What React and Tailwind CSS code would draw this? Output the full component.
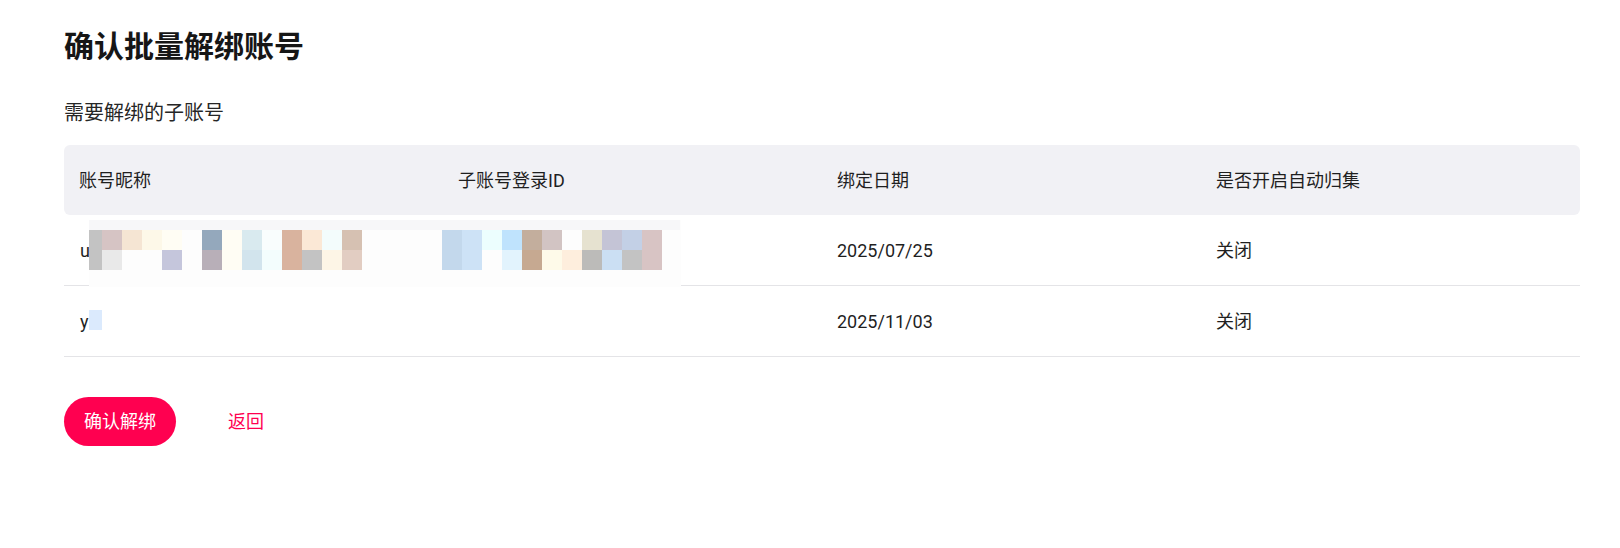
const columns = ["账号昵称", "子账号登录ID", "绑定日期", "是否开启自动归集"];

const rows = [
  { name: "u", loginId: "", date: "2025/07/25", auto: "关闭" },
  { name: "yu", loginId: "", date: "2025/11/03", auto: "关闭" },
];

// mosaic used to hide the account names in the screenshot
const mosaicTop = [
  "bg-[#c3c3c3] w-[13px]",
  "bg-[#d6c4c4]", "bg-[#f5e5d3]", "bg-[#fdf8e8]", "bg-[#fffdf4]", "bg-[#fdfdfd]",
  "bg-[#94a8bc]", "bg-[#fffdf4]", "bg-[#d9eaef]", "bg-[#f9fdfd]", "bg-[#d9b39e]",
  "bg-[#fbe8d6]", "bg-[#f3fcfc]", "bg-[#d6c1b2]", "bg-[#fdfdfd]", "bg-[#fdfdfd]",
  "bg-[#fdfdfd]", "bg-[#fdfdfd]", "bg-[#c3d8ec]", "bg-[#cde2f6]", "bg-[#ecfefe]",
  "bg-[#bfe3fd]", "bg-[#c3ae9d]", "bg-[#d2c4c3]", "bg-[#fdfdfd]", "bg-[#e6e2d0]",
  "bg-[#c4c4d6]", "bg-[#c3d0e6]", "bg-[#d8c4c4]",
];

const mosaicBottom = [
  "bg-[#c3c3c3] w-[13px]",
  "bg-[#e9e9e9]", "bg-[#fdfdfd]", "bg-[#fdfdfd]", "bg-[#c5c6dc]", "bg-[#fdfdfd]",
  "bg-[#b8afb8]", "bg-[#fffdf4]", "bg-[#d2e4ed]", "bg-[#f3fdfd]", "bg-[#d9b39e]",
  "bg-[#c3c3c3]", "bg-[#fdf5e6]", "bg-[#e2cdc2]", "bg-[#fdfdfd]", "bg-[#fdfdfd]",
  "bg-[#fdfdfd]", "bg-[#fdfdfd]", "bg-[#c3d8ec]", "bg-[#cde2f6]", "bg-[#fdfdfd]",
  "bg-[#e2f3fd]", "bg-[#c6a991]", "bg-[#fefae9]", "bg-[#feeedd]", "bg-[#bcbbb9]",
  "bg-[#cbdff3]", "bg-[#c3c3c3]", "bg-[#d8c4c4]",
];

function MosaicRow({ cells }) {
  return (
    <div className="flex h-5">
      {cells.map((cls, i) => (
        <div key={i} className={`h-5 ${i === 0 ? "" : "w-5"} ${cls}`} />
      ))}
    </div>
  );
}

function Mosaic() {
  return (
    <div className="absolute left-[25px] top-[5px] w-[592px] h-[67px] bg-[#fdfdfd]">
      <div className="h-[10px] w-[591px] bg-[#f7f7f9]" />
      <MosaicRow cells={mosaicTop} />
      <MosaicRow cells={mosaicBottom} />
    </div>
  );
}

export default function App() {
  return (
    <div className="min-h-[548px] w-full bg-white pt-[25px] pl-[64px] pr-[40px] font-['Roboto','Noto_Sans_CJK_SC',sans-serif] text-[#1f1f1f]">
      <h1 className="text-[30px] leading-[44px] font-bold text-[#161616]">确认批量解绑账号</h1>
      <p className="mt-[30px] text-[20px] leading-[28px] text-[#262626]">需要解绑的子账号</p>

      <div className="mt-[18px] w-full text-[18px]">
        <div className="grid h-[70px] grid-cols-4 items-center rounded-[6px] bg-[#f1f1f5]">
          {columns.map((col) => (
            <div key={col} className="pl-[15px]">
              {col}
            </div>
          ))}
        </div>

        {rows.map((row, index) => (
          <div key={row.date} className="relative grid h-[71px] grid-cols-4 items-center border-b border-[#e4e4e7]">
            <div className="pl-[16px]">{row.name}</div>
            <div className="pl-[15px]">{row.loginId}</div>
            <div className="pl-[15px]">{row.date}</div>
            <div className="pl-[15px]">{row.auto}</div>
            {index === 0 && <Mosaic />}
            {index === 1 && <div className="absolute left-[25px] top-[24px] h-5 w-[13px] bg-[#dbeafd]" />}
          </div>
        ))}
      </div>

      <div className="mt-[40px] flex items-center">
        <button className="h-[49px] w-[112px] rounded-full bg-[#ff0050] text-[18px] text-white">确认解绑</button>
        <button className="ml-[52px] text-[18px] text-[#ff0050]">返回</button>
      </div>
    </div>
  );
}
